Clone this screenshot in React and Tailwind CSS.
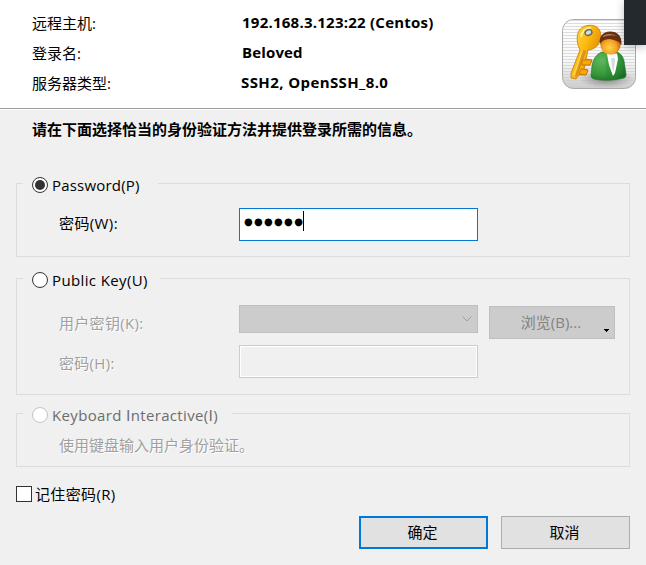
import React from "react";

function Row({ label, value, className = "" }) {
  return (
    <div className="flex h-[30px] items-center">
      <span className="w-[210px] pt-0.5">{label}</span>
      <span className={`font-bold ${className}`}>{value}</span>
    </div>
  );
}

function Radio({ checked, disabled }) {
  return (
    <span
      className={`flex h-4 w-4 shrink-0 items-center justify-center rounded-full border bg-white ${
        disabled ? "border-[#c4c4c4]" : "border-[#333333]"
      }`}
    >
      {checked && <span className="h-[10px] w-[10px] rounded-full bg-[#333333]" />}
    </span>
  );
}

function Legend({ width, children, checked, disabled, spacing = "" }) {
  return (
    <legend className={`ml-1.5 h-[21px] pt-[3px] pl-[9px] ${width}`}>
      <span className="flex h-[18px] items-center gap-1">
        <Radio checked={checked} disabled={disabled} />
        <span className={`${disabled ? "text-[#6d6d6d]" : ""} ${spacing}`}>{children}</span>
      </span>
    </legend>
  );
}

function PlainI() {
  return <span className="font-['Noto_Sans_CJK_SC',sans-serif] leading-none">I</span>;
}

function UserKeyIcon() {
  return (
    <svg width="74" height="70" viewBox="0 0 74 70" className="block">
      <defs>
        <linearGradient id="tile" x1="0" y1="0" x2="0" y2="1">
          <stop offset="0" stopColor="#fdfdfd" />
          <stop offset="0.6" stopColor="#f8f8f8" />
          <stop offset="1" stopColor="#cccccc" />
        </linearGradient>
        <pattern id="lines" width="4" height="3" patternUnits="userSpaceOnUse">
          <rect y="1" width="4" height="1" fill="#cfcfcf" opacity="0.7" />
        </pattern>
        <linearGradient id="gold" x1="0" y1="0" x2="1" y2="0.7">
          <stop offset="0" stopColor="#ffe24a" />
          <stop offset="0.5" stopColor="#fdb90f" />
          <stop offset="1" stopColor="#d67a00" />
        </linearGradient>
        <radialGradient id="face" cx="0.45" cy="0.65" r="0.6">
          <stop offset="0" stopColor="#ffd24d" />
          <stop offset="0.6" stopColor="#f5a01e" />
          <stop offset="1" stopColor="#b85a08" />
        </radialGradient>
        <radialGradient id="coat" cx="0.3" cy="0.3" r="0.8">
          <stop offset="0" stopColor="#5cb85a" />
          <stop offset="0.6" stopColor="#38983c" />
          <stop offset="1" stopColor="#1a6f25" />
        </radialGradient>
        <radialGradient id="shade">
          <stop offset="0" stopColor="#555" stopOpacity="0.7" />
          <stop offset="1" stopColor="#777" stopOpacity="0" />
        </radialGradient>
      </defs>
      <rect x="0.5" y="0.5" width="73" height="69" rx="11" fill="url(#tile)" stroke="#a9a9a9" />
      <rect x="1" y="1" width="72" height="68" rx="11" fill="url(#lines)" />
      <ellipse cx="44" cy="60" rx="28" ry="9" fill="url(#shade)" />
      <path
        d="M16 14C18 8 24 5.500 31 6.500C38 8 40.500 15 38 22C36 28 30 31 26 31L24 40L30 41L28 46L23 46L22 50L26 51L24 56L17 56L14 60L9 59L9 54L18 31C15 25 14.500 19 16 14Z"
        fill="url(#gold)"
        stroke="#c77a05"
        strokeWidth="0.8"
      />
      <path d="M20 31L11 56L13.500 58L23 32Z" fill="#fff08a" opacity="0.5" />
      <path d="M21 31L12.500 58L15 57L24 32Z" fill="#c96f00" opacity="0.6" />
      <path d="M20 41L30 41L28 46L20 46ZM19 50L26 51L24 56L17 55Z" fill="#f9a80b" stroke="#b96700" strokeWidth="0.7" />
      <path d="M19 18C20 12 24 9 29 9" fill="none" stroke="#fff29a" strokeWidth="2" />
      <ellipse cx="26.500" cy="13.500" rx="3.500" ry="2.800" fill="#d8dadd" stroke="#68705f" strokeWidth="1.500" transform="rotate(-25 26.500 13.500)" />
      <path
        d="M40 33C34 35 31 41 30 47L29 57Q29 59 32 60Q47 63 62 59Q64.500 58 64 55L62 42C61 37 58 34 55 33Z"
        fill="url(#coat)"
        stroke="#23782c"
        strokeWidth="0.7"
      />
      <path d="M45 35L55 34.500L56 40L53 54L51 57L47 46Z" fill="#ffffff" />
      <path d="M44 36L47 46L51 60L44 60ZM56 36L57 44L51.500 60L57 59Z" fill="#26852f" opacity="0.3" />
      <path d="M49 39L52.500 39L53 42L51.500 53L50 48L49.500 42Z" fill="#d8dade" />
      <ellipse cx="48.500" cy="25.500" rx="10.200" ry="10.300" fill="url(#face)" />
      <path d="M38 25C36.500 18 41 12.500 48 12.500C56 12.500 60 17 59.500 26L57 23Q53 21 48 20Q42 20 39.500 23Z" fill="#69300f" />
      <path d="M41 17Q47 13 55 17Q48 15 41 18Z" fill="#b98367" />
    </svg>
  );
}

const emboss = "text-[#a0a0a0] [text-shadow:1px_1px_0_#fff]";

export default function App() {
  return (
    <div className="relative h-[565px] w-[646px] overflow-hidden bg-[#f0f0f0] font-['Open_Sans','Noto_Sans_CJK_SC',sans-serif] text-[15px] leading-[20px] whitespace-nowrap text-black">
      <header className="flex h-[109px] justify-between border-b border-[#a0a0a0] bg-white pl-8">
        <div className="pt-[7px]">
          <Row label="远程主机:" value="192.168.3.123:22 (Centos)" className="tracking-[0.24px]" />
          <Row label="登录名:" value="Beloved" className="tracking-[0.15px]" />
          <Row label="服务器类型:" value="SSH2, OpenSSH_8.0" className="-ml-px tracking-[0.4px]" />
        </div>
        <div className="mt-[19px] mr-[10px]">
          <UserKeyIcon />
        </div>
      </header>
      <div className="absolute top-0 right-0 h-[45px] w-[22px] bg-[#24292e] shadow-[0_2px_8px_rgba(0,0,0,0.25)]" />
      <main className="border-t border-white px-4">
        <p className="mt-[9px] ml-4 h-5 font-bold">请在下面选择恰当的身份验证方法并提供登录所需的信息。</p>

        <fieldset className="mt-[34px] h-[84px] border border-[#dcdcdc]">
          <Legend width="w-[135px]" checked spacing="tracking-[0.2px]">Password(P)</Legend>
          <div className="mt-[14px] flex h-[33px] pl-[42px]">
            <span className="mt-[5px] w-[180px] tracking-[0.4px]">密码(W):</span>
            <div className="flex h-[33px] w-[239px] border border-[#0078d7] bg-white pt-0.5 pl-1">
              <span className="h-5 w-[59px] font-['DejaVu_Sans',sans-serif] text-[10px] leading-[22px] tracking-[1.3px]">●●●●●●</span>
              <span className="h-5 w-px bg-black" />
            </div>
          </div>
        </fieldset>

        <fieldset className="mt-[11px] h-[127px] border border-[#dcdcdc]">
          <Legend width="w-[137px]" spacing="tracking-[0.38px]">Public Key(U)</Legend>
          <div className="mt-4 flex h-[34px] pl-[42px]">
            <span className={`mt-[8px] w-[180px] tracking-[0.3px] ${emboss}`}>用户密钥(K):</span>
            <div className="flex h-7 w-[239px] items-center justify-end border border-[#bfbfbf] bg-[#cccccc] pr-[5px]">
              <svg width="10" height="6" viewBox="0 0 10 6" fill="none" stroke="#a0a0a0">
                <path d="M0.500 0.500L5 5L9.500 0.500" />
              </svg>
            </div>
            <button className="relative mt-px ml-[11px] h-[33px] w-[126px] border border-[#bfbfbf] bg-[#cccccc] pr-0.5 pb-0.5 text-[#838383]">
              浏览(B)...
              <svg className="absolute right-[5px] bottom-[6px]" width="5" height="3" viewBox="0 0 5 3" shapeRendering="crispEdges">
                <path d="M0 0H5V1H4V2H3V3H2V2H1V1H0Z" />
              </svg>
            </button>
          </div>
          <div className="mt-[6px] flex h-[33px] pl-[42px]">
            <span className={`mt-[8px] w-[180px] tracking-[0.3px] ${emboss}`}>密码(H):</span>
            <div className="h-[33px] w-[239px] border border-[#cccccc]">
              <div className="h-full border border-white" />
            </div>
          </div>
        </fieldset>

        <fieldset className="mt-2 h-[64px] border border-[#dcdcdc]">
          <Legend width="w-[209px]" disabled spacing="tracking-[0.34px]">Keyboard <PlainI />nteractive(<PlainI />)</Legend>
          <p className={`mt-[11px] pl-[42px] ${emboss}`}>使用键盘输入用户身份验证。</p>
        </fieldset>

        <div className="mt-[19px] flex h-4 items-center gap-[3px]">
          <span className="h-4 w-4 border border-[#333333] bg-white" />
          <span className="tracking-[0.35px]">记住密码(R)</span>
        </div>

        <div className="mt-[14px] flex justify-end gap-[13px]">
          <button className="h-[33px] w-[129px] border-2 border-[#0078d7] bg-[#e1e1e1] pr-0.5 pb-0.5">确定</button>
          <button className="h-[33px] w-[129px] border border-[#adadad] bg-[#e1e1e1] pr-0.5 pb-0.5">取消</button>
        </div>
      </main>
    </div>
  );
}
